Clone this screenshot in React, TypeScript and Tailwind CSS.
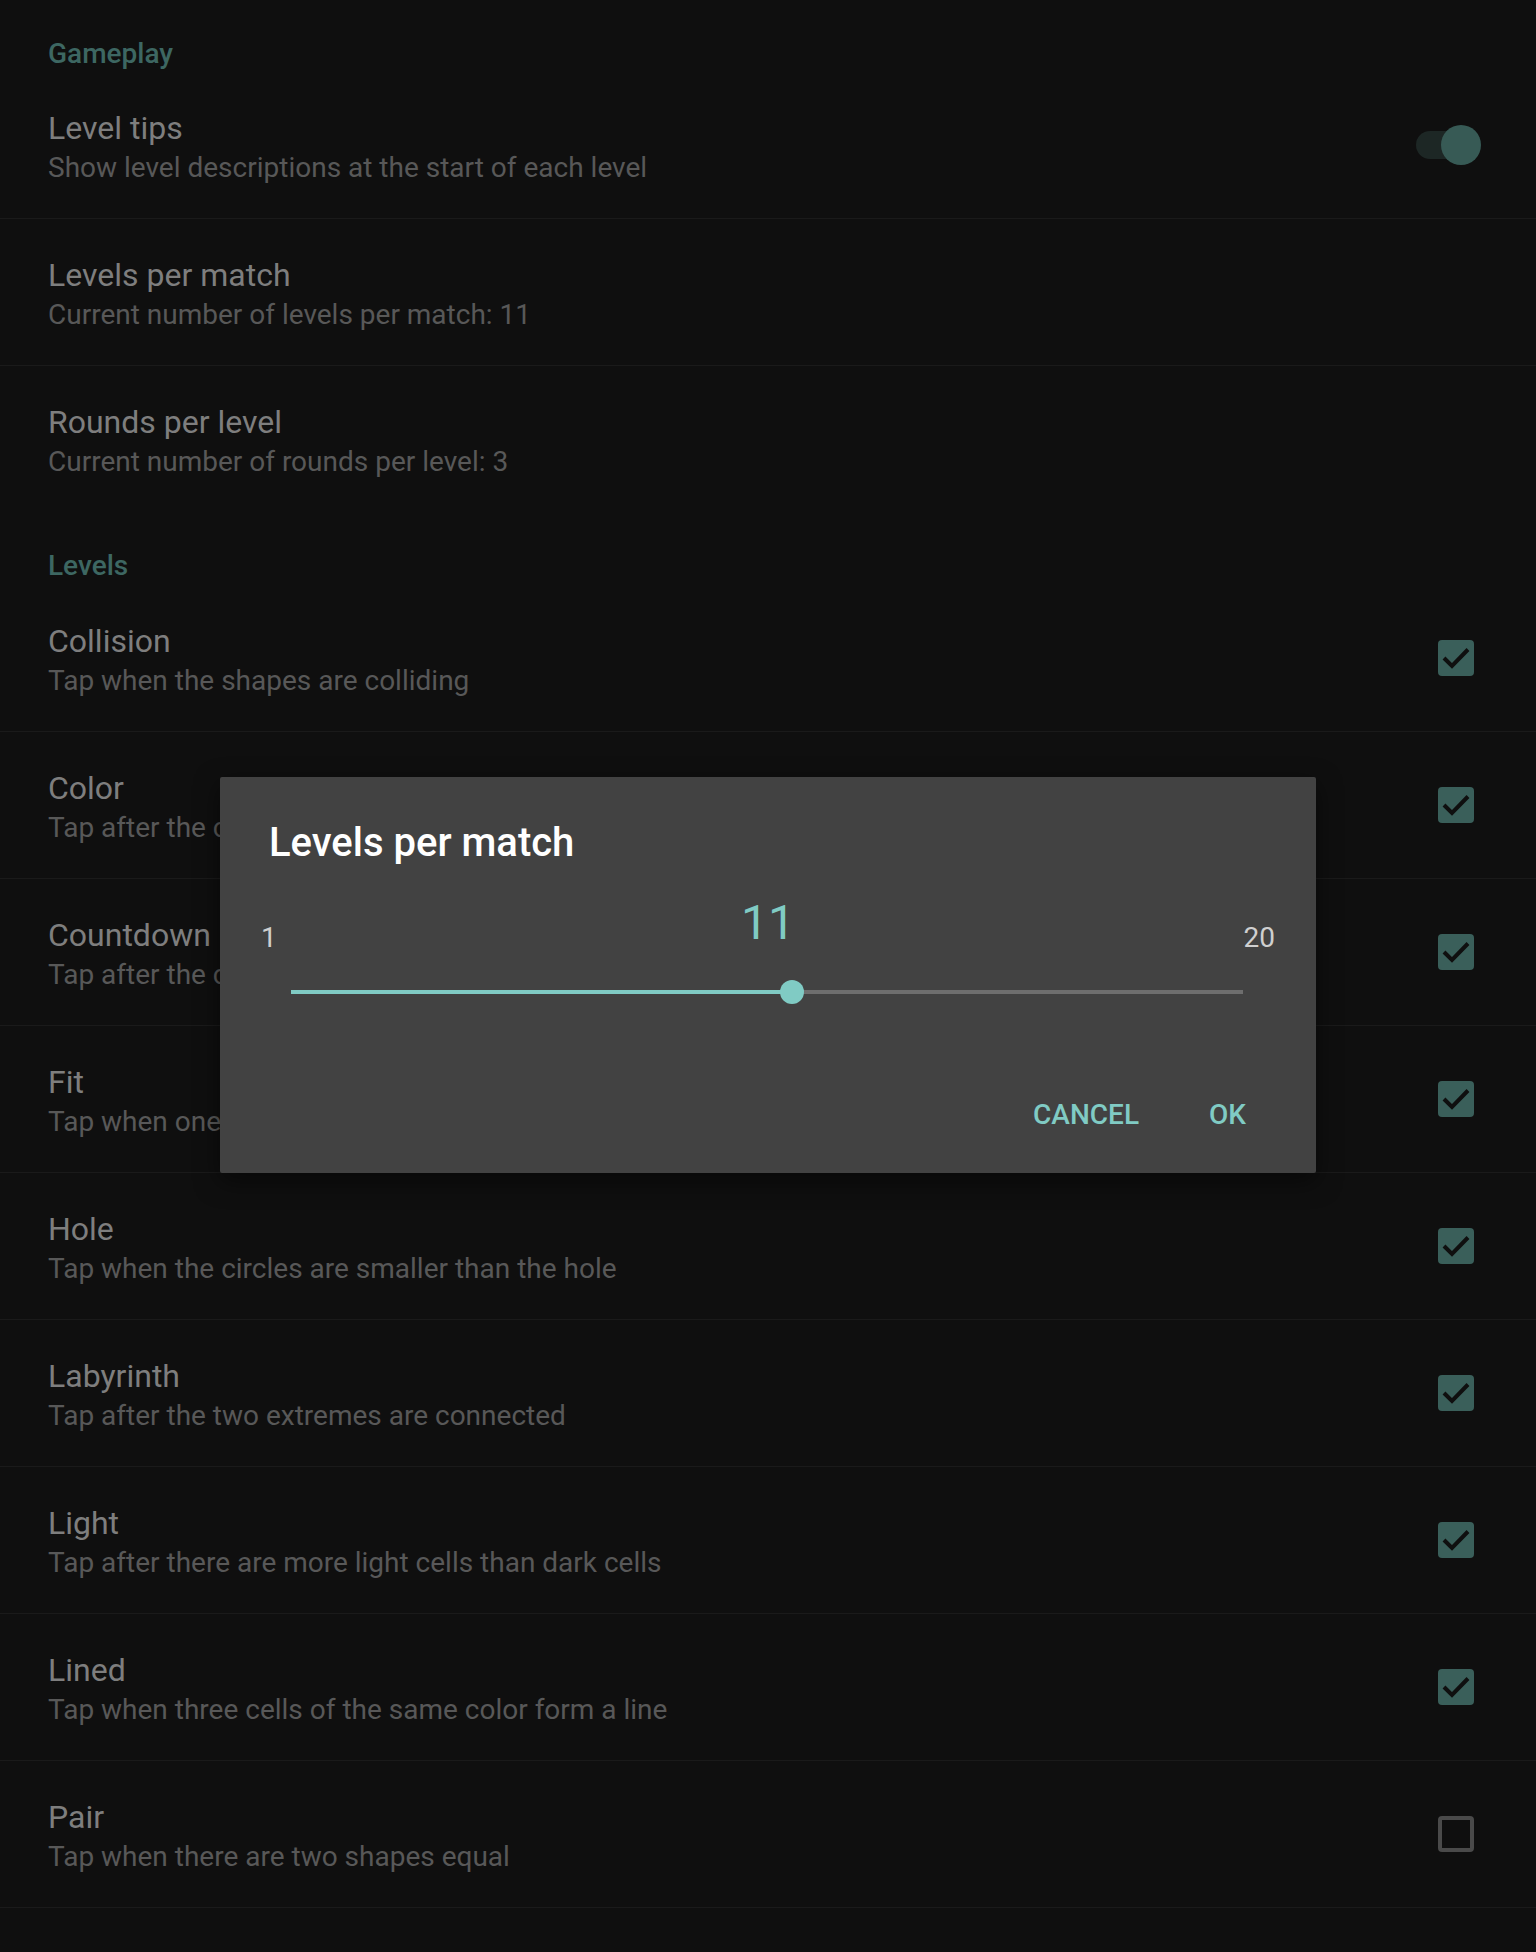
import React from "react";

type Row = { title: string; summary: string; control?: "check" | "uncheck" | "switch" | "none"; divider?: boolean };

const gameplay: Row[] = [
  { title: "Level tips", summary: "Show level descriptions at the start of each level", control: "switch", divider: true },
  { title: "Levels per match", summary: "Current number of levels per match: 11", control: "none", divider: true },
  { title: "Rounds per level", summary: "Current number of rounds per level: 3", control: "none", divider: false },
];

const levels: Row[] = [
  { title: "Collision", summary: "Tap when the shapes are colliding", control: "check", divider: true },
  { title: "Color", summary: "Tap after the color of the shapes changes", control: "check", divider: true },
  { title: "Countdown", summary: "Tap after the countdown reaches zero", control: "check", divider: true },
  { title: "Fit", summary: "Tap when one shape fits inside the other", control: "check", divider: true },
  { title: "Hole", summary: "Tap when the circles are smaller than the hole", control: "check", divider: true },
  { title: "Labyrinth", summary: "Tap after the two extremes are connected", control: "check", divider: true },
  { title: "Light", summary: "Tap after there are more light cells than dark cells", control: "check", divider: true },
  { title: "Lined", summary: "Tap when three cells of the same color form a line", control: "check", divider: true },
  { title: "Pair", summary: "Tap when there are two shapes equal", control: "uncheck", divider: true },
  { title: "Rotation", summary: "Tap when the shapes have the same rotation", control: "check", divider: true },
];

function CheckBox({ checked }: { checked: boolean }) {
  if (!checked) {
    return <div className="w-[36px] h-[36px] rounded-[4px] border-[4px] border-[#4a4a4a]" />;
  }
  return (
    <svg width="36" height="36" viewBox="0 0 36 36">
      <rect x="0" y="0" width="36" height="36" rx="4" fill="#3a5f5a" />
      <polyline points="6,18 14,26 30,9.5" fill="none" stroke="#0f0f0f" strokeWidth="4" />
    </svg>
  );
}

function Switch() {
  return (
    <div className="relative w-[60px] h-[28px] rounded-full bg-[#1d2725] mr-[-2px]">
      <div className="absolute right-[-5px] top-[-6px] w-[40px] h-[40px] rounded-full bg-[#375a55]" />
    </div>
  );
}

function PrefRow({ row }: { row: Row }) {
  return (
    <div className={row.divider ? "h-[147px] border-b border-[#1a1a1a]" : "h-[146px]"}>
      <div className="h-[146px] flex items-center pl-[48px] pr-[62px]">
        <div className="flex-1 flex flex-col pt-[5px]">
          <div className="text-[32px] leading-[40px] text-[#7e7e7e]">{row.title}</div>
          <div className="text-[28px] leading-[40px] text-[#585858]">{row.summary}</div>
        </div>
        {row.control === "check" && <CheckBox checked />}
        {row.control === "uncheck" && <CheckBox checked={false} />}
        {row.control === "switch" && <Switch />}
      </div>
    </div>
  );
}

function Category({ label, h }: { label: string; h: string }) {
  return (
    <div className={h + " pl-[48px] pt-[37px]"}>
      <div className="text-[28px] leading-[34px] font-medium text-[#3d6762]">{label}</div>
    </div>
  );
}

export default function App() {
  const pct = ((11 - 1) / (20 - 1)) * 100;
  return (
    <div className="relative w-[1536px] h-[1952px] overflow-hidden bg-[#0f0f0f] font-['Roboto',sans-serif] antialiased">
      <Category label="Gameplay" h="h-[72px]" />
      {gameplay.map((r) => (
        <PrefRow key={r.title} row={r} />
      ))}
      <Category label="Levels" h="h-[73px]" />
      {levels.map((r) => (
        <PrefRow key={r.title} row={r} />
      ))}

      <div className="absolute left-[220px] top-[777px] w-[1096px] h-[396px] bg-[#424242] rounded-[2px] shadow-[0_8px_24px_rgba(0,0,0,0.5)] flex flex-col">
        <div className="pt-[42px] pl-[49px] text-[40px] leading-[48px] font-medium text-white">Levels per match</div>
        <div className="mt-[28px] px-[41px] grid grid-cols-[1fr_auto_1fr] items-start">
          <div className="mt-[27px] text-[28px] leading-[32px] text-[#cfcfcf]">1</div>
          <div className="text-[48px] leading-[56px] text-[#80cbc4]">11</div>
          <div className="mt-[27px] text-[28px] leading-[32px] text-[#cfcfcf] text-right">20</div>
        </div>
        <div className="mt-[26px] ml-[71px] mr-[73px] h-[24px] flex items-center">
          <div className="relative w-full h-[4px] bg-[#6e6e6e]">
            <div className="absolute left-0 top-0 h-[4px] bg-[#80cbc4]" style={{ width: `${pct}%` }} />
            <div
              className="absolute top-[-10px] w-[24px] h-[24px] rounded-full bg-[#80cbc4] -translate-x-1/2"
              style={{ left: `${pct}%` }}
            />
          </div>
        </div>
        <div className="mt-auto pb-[42px] pr-[70px] flex justify-end gap-[70px] text-[28px] leading-[32px] font-medium text-[#80cbc4]">
          <span>CANCEL</span>
          <span>OK</span>
        </div>
      </div>
    </div>
  );
}
